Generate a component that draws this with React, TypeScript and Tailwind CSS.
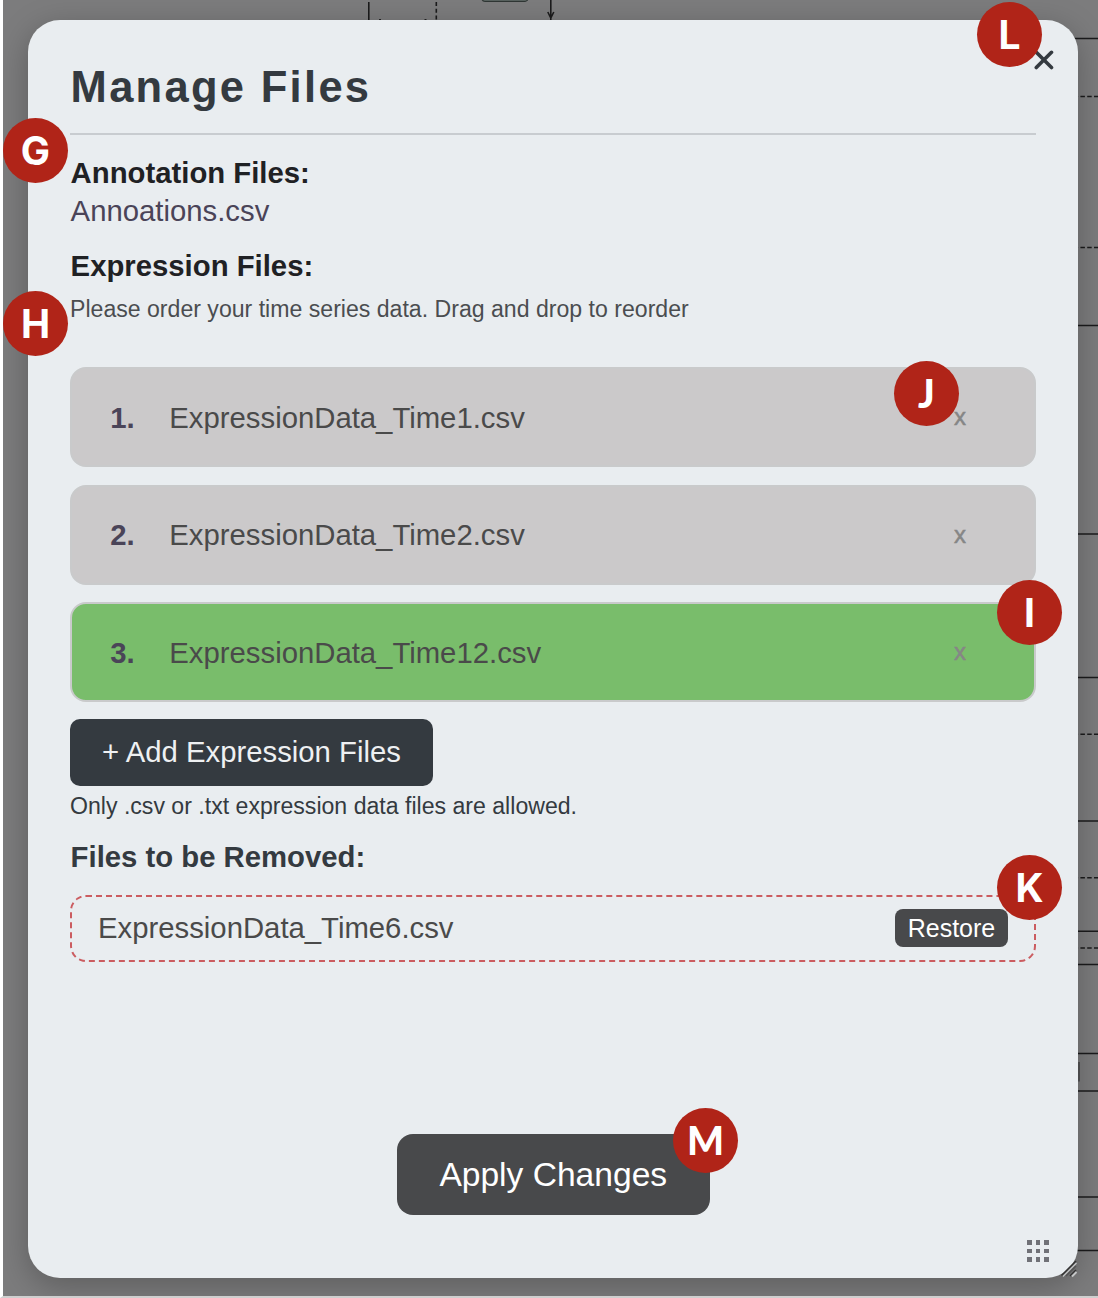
import React from "react";

const files = [
  { name: "ExpressionData_Time1.csv", added: false },
  { name: "ExpressionData_Time2.csv", added: false },
  { name: "ExpressionData_Time12.csv", added: true },
];

const edgeLines = [
  { y: 38.5 },
  { y: 96.5, dashed: true },
  { y: 247.5, dashed: true },
  { y: 325.5 },
  { y: 534 },
  { y: 677.5 },
  { y: 734.2, dashed: true },
  { y: 821 },
  { y: 877.7, dashed: true },
  { y: 931.3 },
  { y: 948, dashed: true },
  { y: 964.5 },
  { y: 1053.5 },
  { y: 1091 },
  { y: 1197 },
  { y: 1250.5 },
];

const inter = "font-['Inter'] font-bold text-[39px]";
const lato = "font-['Lato'] font-black text-[39px]";

function Badge({ letter, place, face = inter }: { letter: string; place: string; face?: string }) {
  return (
    <div
      className={`absolute flex h-[65px] w-[65px] items-center justify-center rounded-full bg-[#b02418] leading-none text-white ${face} ${place}`}
    >
      <span>{letter}</span>
    </div>
  );
}

function Diagram() {
  return (
    <svg className="absolute inset-0" width="1098" height="1298" fill="none" stroke="#1b1b1c" strokeWidth="1.6">
      <path d="M368.8 2V22" />
      <path d="M436.3 2V22" strokeDasharray="4 2.8" />
      <path d="M379 19.6h2M424.500 19.6h2" strokeWidth="1" />
      <rect x="482" y="-12" width="46" height="13.300" rx="3" fill="#66716d" stroke="#2f3634" strokeWidth="1.2" />
      <path d="M550.800 0V20M547.800 12l3 6 3-6" />
      {edgeLines.map((l) => (
        <path key={l.y} d={`M1060 ${l.y}H1098`} strokeDasharray={l.dashed ? "4.500 2.300" : undefined} />
      ))}
      <path d="M1079 1062V1081.500" stroke="#4a4a4b" />
    </svg>
  );
}

export default function App() {
  return (
    <div className="relative h-[1298px] w-[1098px] overflow-hidden border-b-2 border-l-[3px] border-b-[#cfcfcf] border-l-white bg-[#7c7c7d] pt-5 pl-[25px] font-['Liberation_Sans',Arial,sans-serif]">
      <div className="absolute top-0 -left-[3px]">
        <div className="relative h-[1296px] w-[1098px]">
          <Diagram />
        </div>
      </div>

      <section className="relative flex h-[1258px] w-[1049.500px] flex-col rounded-[32px] bg-[#e9edf0] px-[42px] pt-[42px] text-[29.300px] leading-[38px] shadow-[0_8px_32px_rgba(0,0,0,0.25)]">
        <header className="border-b-2 border-[#c8ccd0] pb-[21px]">
          <h1 className="pl-[0.600px] text-[43.500px] leading-[50px] font-bold tracking-[2.300px] text-[#343a40]">Manage Files</h1>
        </header>

        <h2 className="mt-[19px] pl-[0.600px] font-bold text-[#1f2124]">Annotation Files:</h2>
        <p className="pl-[0.600px] text-[#4a4458]">Annoations.csv</p>
        <h2 className="mt-[16.500px] pl-[0.600px] font-bold text-[#1f2124]">Expression Files:</h2>
        <p className="mt-[9.500px] text-[23.100px] leading-[30px] text-[#4b4d50]">
          Please order your time series data. Drag and drop to reorder
        </p>

        <ol className="mt-[43px] flex flex-col gap-[17.500px]">
          {files.map((f, i) => (
            <li
              key={f.name}
              className={`flex h-[100px] items-center rounded-2xl border-2 border-[#c9cacb] pr-[67.500px] pl-[38px] ${f.added ? "bg-[#79bd6b]" : "bg-[#cbc9ca]"}`}
            >
              <span className="w-[59px] pt-px pl-[0.300px] font-bold text-[#4a4458]">{i + 1}.</span>
              <span className="flex-1 pt-px pl-[0.300px] text-[#4a4a4a]">{f.name}</span>
              <button className="text-[24px] leading-none text-[#868686] [-webkit-text-stroke:0.5px_#868686]">x</button>
            </li>
          ))}
        </ol>

        <button className="mt-[17px] h-[67px] w-[363px] shrink-0 rounded-[10px] bg-[#343a40] pb-px text-[#eef0f2]">
          + Add Expression Files
        </button>
        <p className="mt-[4.500px] text-[23.100px] leading-[30px] text-[#343a40]">
          Only .csv or .txt expression data files are allowed.
        </p>

        <h2 className="mt-[17px] pl-[0.600px] font-bold text-[#343a40]">Files to be Removed:</h2>
        <div className="mt-[19px] flex h-[67px] shrink-0 items-center justify-between rounded-2xl border-2 border-dashed border-[#cb5c60] pr-[25.500px] pl-[26px]">
          <span className="text-[#4a4a4a]">ExpressionData_Time6.csv</span>
          <button className="h-[38px] w-[113px] rounded-[8px] bg-[#48494b] text-[25px] leading-none text-white">Restore</button>
        </div>

        <button className="mt-auto mb-[63px] ml-px h-[81px] w-[313px] shrink-0 self-center rounded-2xl bg-[#48494b] text-[33.600px] text-white">
          Apply Changes
        </button>

        <svg className="absolute top-[29.500px] right-[23.700px]" width="20" height="20" stroke="#343a40" strokeWidth="3.600" strokeLinecap="round">
          <path d="M2.300 2.300L17.500 17.500M17.500 2.300L2.300 17.500" />
        </svg>
        <div className="absolute right-[29px] bottom-[16.500px] grid grid-cols-3 gap-[4px]">
          {Array.from({ length: 9 }, (_, i) => (
            <span key={i} className="h-[4.500px] w-[4.500px] bg-[#707177]" />
          ))}
        </div>
        <svg className="absolute right-0 bottom-0" width="20" height="20" fill="none">
          <path d="M3.500 17.500L18 3" stroke="#333" strokeWidth="1.500" />
          <path d="M5 18.500L18.500 5" stroke="#c5c7c8" strokeWidth="1.200" />
          <path d="M8 18L18 8" stroke="#555" strokeWidth="1.500" />
          <path d="M12 18L18 12" stroke="#333" strokeWidth="1.500" />
          <path d="M14 18.500L18.500 14" stroke="#c5c7c8" strokeWidth="1.800" />
        </svg>
      </section>

      <Badge letter="G" place="left-0 top-[118px]" />
      <Badge letter="H" place="left-0 top-[291px]" />
      <Badge letter="J" place="left-[891px] top-[361px]" face={lato} />
      <Badge letter="I" place="left-[994px] top-[580px]" />
      <Badge letter="K" place="left-[994px] top-[855px]" />
      <Badge letter="L" place="left-[974px] top-[2px]" />
      <Badge letter="M" place="left-[670px] top-[1108px]" face={lato} />
    </div>
  );
}
